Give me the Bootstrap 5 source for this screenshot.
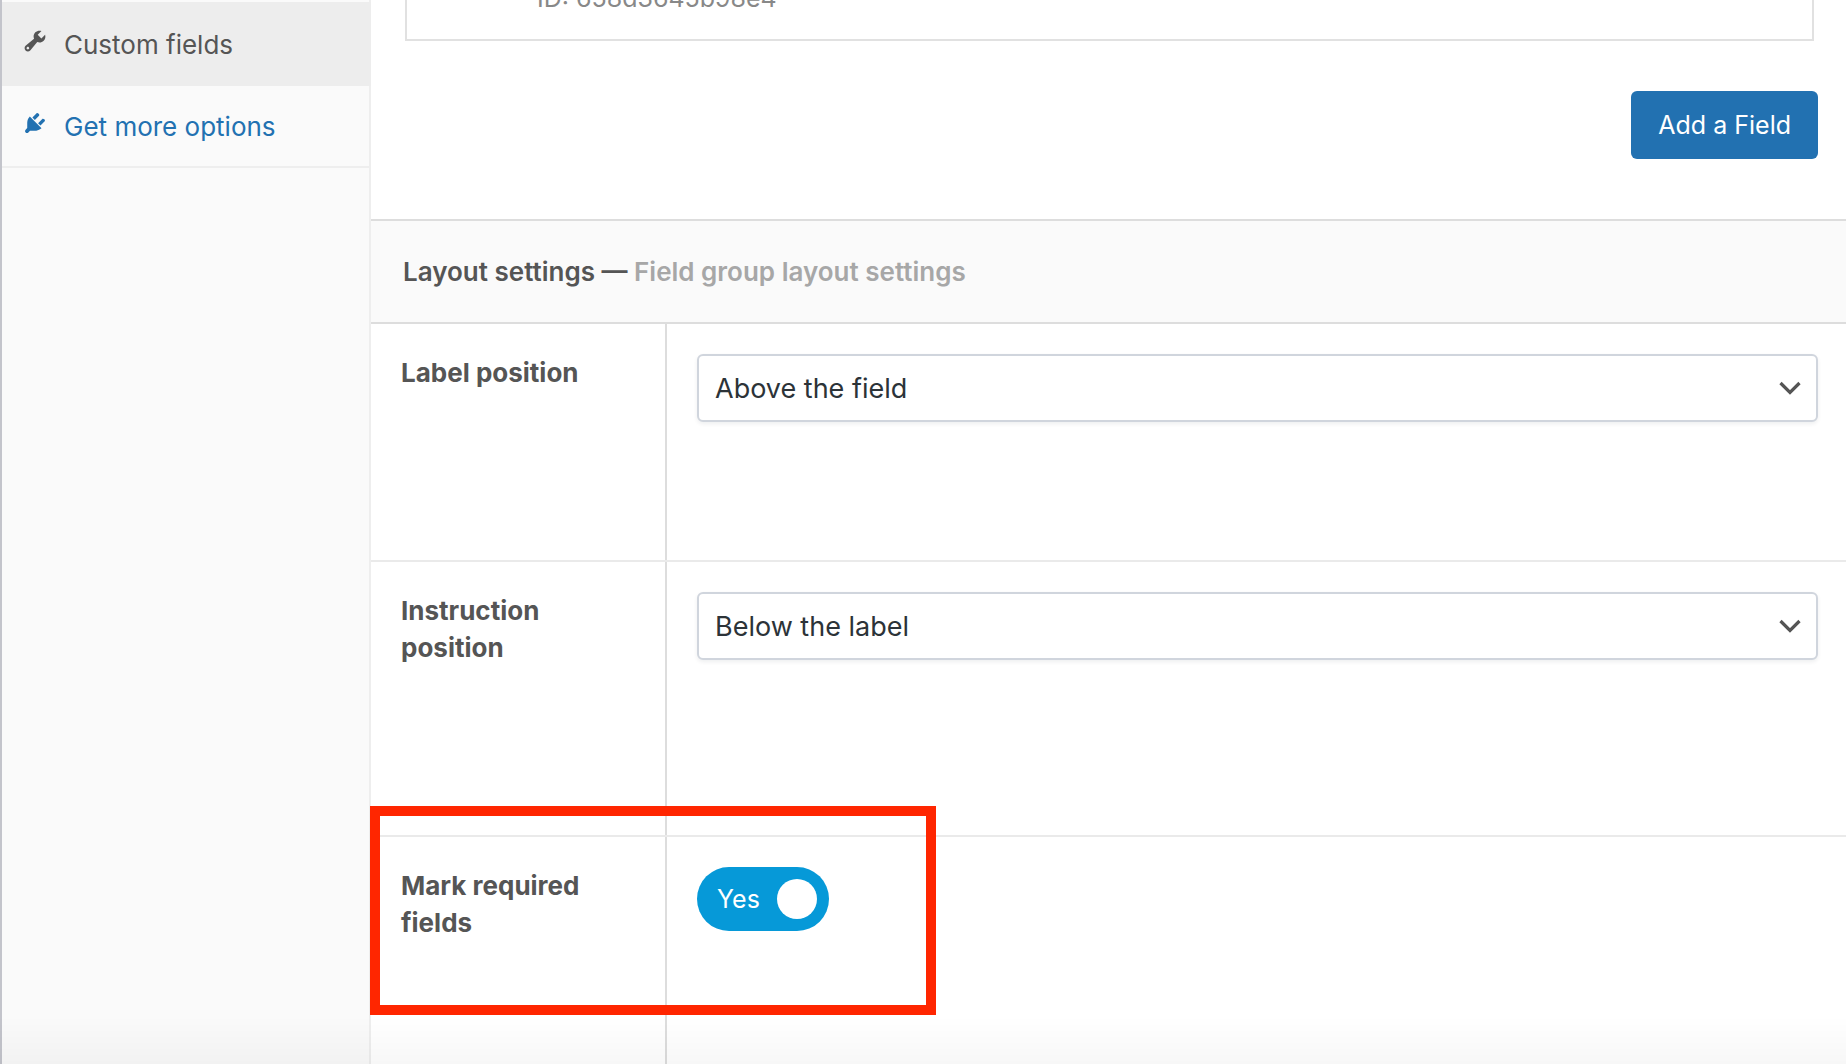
<!DOCTYPE html>
<html lang="en">
<head>
<meta charset="utf-8">
<meta name="viewport" content="width=device-width, initial-scale=1">
<title>Layout settings</title>
<link href="https://cdn.jsdelivr.net/npm/bootstrap@5.3.0/dist/css/bootstrap.min.css" rel="stylesheet">
<style>
  body { font-family: Inter, "Liberation Sans", sans-serif; font-size: 26px; line-height: 37px; color: #555; background: #fff; }
  .side-tabs { width: 371px; background: #fafafa; border-left: 2px solid #c3c4cb; border-right: 2px solid #eee; padding-top: 2px; }
  .side-tabs a { height: 82px; gap: 16px; padding-left: 20px; color: #2271b1; border-bottom: 2px solid #eee; text-decoration: none; }
  .side-tabs a.current { height: 84px; color: #555; background: #ededed; margin-right: -2px; border-bottom: 0; }
  .side-tabs svg { width: 26px; height: 26px; fill: currentColor; margin-bottom: 6px; }
  .field-box { height: 41px; margin: 0 32px 0 34px; padding: 0 130px 22px; border: 2px solid #e1e1e1; border-top: 0; color: #888; font-size: 25px; }
  .add-row { padding: 50px 28px 60px; }
  .btn-add { --bs-btn-color: #fff; --bs-btn-bg: #2271b1; --bs-btn-hover-color: #fff; --bs-btn-hover-bg: #135e96; --bs-btn-border-width: 0; height: 68px; padding: 2px 27px 0; font-size: 25px; border-radius: 6px; }
  .section-title { height: 105px; padding: 0 32px; font-size: 26px; font-weight: 600; background: #fafafa; border-top: 2px solid #ddd; border-bottom: 2px solid #ddd; }
  .section-title span { color: #a7a7a7; }
  .setting + .setting { border-top: 2px solid #eaeaea; }
  .setting-name { width: 296px; padding: 30px; border-right: 2px solid #ddd; font-weight: 700; }
  .setting-value { padding: 30px 28px 30px 30px; }
  .setting-short { min-height: 236px; }
  .setting-tall { min-height: 275px; }
  .form-select { height: 68px; padding: 2px 68px 0 16px; font-size: 27px; color: #2c3338; border: 2px solid #d0d5dd; border-radius: 6px; box-shadow: 0 2px 4px rgba(16,24,40,.07);
    background-image: url("data:image/svg+xml,%3Csvg xmlns='http://www.w3.org/2000/svg' viewBox='0 0 22 14'%3E%3Cpath d='M1.5 2 11 11.500 20.500 2' fill='none' stroke='%23555' stroke-width='3.200'/%3E%3C/svg%3E"); background-size: 22px 14px; background-position: right 15px center; }
  .toggle { width: 132px; height: 64px; padding: 0 12px 0 20px; border-radius: 32px; background: #0699d8; color: #fff; font-size: 25px; cursor: pointer; }
  .toggle input { appearance: none; width: 40px; height: 40px; margin: 0; border-radius: 50%; background: #fff; }
  .callout { left: -1px; top: -31px; width: 566px; height: 209px; border: 10px solid #ff2600; pointer-events: none; }
  .page-fade { height: 48px; background: linear-gradient(rgba(0,0,0,0), rgba(0,0,0,.03)); pointer-events: none; }
</style>
</head>
<body>
<div class="d-flex min-vh-100 overflow-hidden">
  <nav class="side-tabs flex-shrink-0" aria-label="Field group settings">
    <a href="#" class="current d-flex align-items-center" aria-current="page">
      <svg viewBox="0 0 20 20" aria-hidden="true"><path d="M16.680 9.770c-1.340 1.340-3.300 1.670-4.950.990l-5.410 6.520c-.990.990-2.590.990-3.580 0s-.990-2.590 0-3.570l6.520-5.420c-.680-1.650-.350-3.610.990-4.950 1.280-1.280 3.120-1.620 4.720-1.060l-2.890 2.890 2.820 2.820 2.860-2.870c.530 1.580.180 3.390-1.080 4.650zM3.810 16.210c.400.390 1.040.390 1.430 0 .400-.400.400-1.040 0-1.430-.390-.400-1.030-.400-1.430 0-.390.390-.390 1.030 0 1.430z"/></svg>
      <span>Custom fields</span>
    </a>
    <a href="#" class="d-flex align-items-center">
      <svg viewBox="0 0 20 20" aria-hidden="true"><path d="M13.110 4.360L9.870 7.600 8 5.730l3.240-3.240c.350-.340 1.050-.200 1.560.320.520.510.660 1.210.310 1.550zm-8 1.770l.910-1.120 9.010 9.010-1.190.840c-.710.710-2.630 1.160-3.820 1.160H6.140L4.900 17.260c-.590.590-1.540.590-2.120 0-.590-.580-.590-1.530 0-2.120l1.240-1.240v-3.880c0-1.130.400-3.190 1.090-3.890zm7.260 3.970l3.240-3.240c.340-.350 1.040-.210 1.550.310.520.510.660 1.210.310 1.550l-3.240 3.250z"/></svg>
      <span>Get more options</span>
    </a>
  </nav>
  <main class="flex-grow-1 d-flex flex-column">
    <div class="field-box d-flex align-items-end overflow-hidden"><span>ID: 658d3645b98e4</span></div>
    <div class="add-row d-flex justify-content-end">
      <button type="button" class="btn btn-add">Add a Field</button>
    </div>
    <h2 class="section-title d-flex align-items-center mb-0"><div>Layout settings — <span>Field group layout settings</span></div></h2>
    <div class="setting setting-short d-flex">
      <label class="setting-name flex-shrink-0" for="label-position">Label position</label>
      <div class="setting-value flex-grow-1">
        <select class="form-select" id="label-position"><option>Above the field</option></select>
      </div>
    </div>
    <div class="setting setting-tall d-flex">
      <label class="setting-name flex-shrink-0" for="instruction-position">Instruction position</label>
      <div class="setting-value flex-grow-1">
        <select class="form-select" id="instruction-position"><option>Below the label</option></select>
      </div>
    </div>
    <div class="setting d-flex flex-grow-1 position-relative">
      <label class="setting-name flex-shrink-0" for="required-mark">Mark required fields</label>
      <div class="setting-value flex-grow-1">
        <label class="toggle d-flex align-items-center justify-content-between"><span>Yes</span><input type="checkbox" role="switch" id="required-mark" checked></label>
      </div>
      <div class="callout position-absolute"></div>
    </div>
  </main>
</div>
<div class="page-fade fixed-bottom"></div>
<script src="https://cdn.jsdelivr.net/npm/bootstrap@5.3.0/dist/js/bootstrap.bundle.min.js"></script>
</body>
</html>
